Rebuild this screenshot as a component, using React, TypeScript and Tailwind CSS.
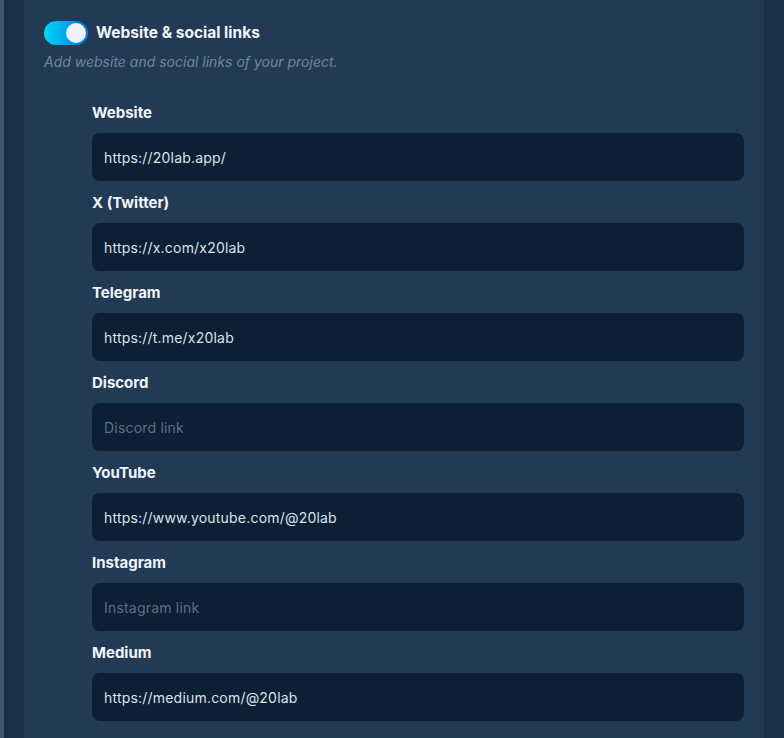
import React from 'react';

const fields = [
  { label: 'Website', value: 'https://20lab.app/', placeholder: 'Website link' },
  { label: 'X (Twitter)', value: 'https://x.com/x20lab', placeholder: 'X link' },
  { label: 'Telegram', value: 'https://t.me/x20lab', placeholder: 'Telegram link' },
  { label: 'Discord', value: '', placeholder: 'Discord link' },
  { label: 'YouTube', value: 'https://www.youtube.com/@20lab', placeholder: 'YouTube link' },
  { label: 'Instagram', value: '', placeholder: 'Instagram link' },
  { label: 'Medium', value: 'https://medium.com/@20lab', placeholder: 'Medium link' },
];

export default function App() {
  return (
    <div
      className="h-[738px] overflow-hidden bg-[#1b3048] border-l-4 border-[#3e5673] pl-5 pr-5"
      style={{ fontFamily: 'Inter, "Noto Sans", sans-serif' }}
    >
      <div className="h-full bg-[#233a55] px-5 pt-[21px]">
        <div className="flex items-center gap-2">
          <button className="relative w-11 h-6 rounded-full bg-gradient-to-r from-[#06d6f5] to-[#0a74e0]">
            <span className="absolute right-[2px] top-[2px] w-5 h-5 rounded-full bg-[#eef2f8]" />
          </button>
          <span className="text-[15.5px] font-bold text-[#f1f4f8]">Website &amp; social links</span>
        </div>
        <p className="mt-[6px] text-[14px] italic text-[#71859d]">
          Add website and social links of your project.
        </p>

        <div className="pl-12 mt-[30px] flex flex-col">
          {fields.map((f) => (
            <div key={f.label} className="h-[90px] flex flex-col">
              <label className="h-[22px] leading-[22px] text-[15px] font-bold text-[#f1f4f8]">
                {f.label}
              </label>
              <input
                defaultValue={f.value}
                placeholder={f.placeholder}
                className="mt-[9px] h-12 w-full rounded-lg bg-[#0c1f35] px-3 text-[14px] tracking-[0.2px] text-[#dbe2ea] placeholder:text-[#5d6f85] outline-none"
              />
            </div>
          ))}
        </div>
      </div>
    </div>
  );
}
